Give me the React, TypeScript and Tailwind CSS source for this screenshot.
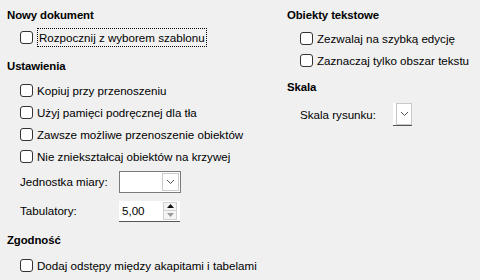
import React from 'react';

function Box() {
  return (
    <span className="w-[13px] h-[13px] shrink-0 rounded-[3px] border border-[#333333] bg-white" />
  );
}

function Check({ label, focused = false }: { label: string; focused?: boolean }) {
  return (
    <div className="flex items-center h-[22px] pl-[13px] gap-[4px]">
      <Box />
      <span
        className={
          focused
            ? 'border border-dotted border-black px-[1px] leading-[17px]'
            : 'leading-[17px]'
        }
      >
        {label}
      </span>
    </div>
  );
}

function Heading({ children, className = '' }: { children: React.ReactNode; className?: string }) {
  return (
    <div className={'h-[20px] flex items-center font-bold text-[11.4px] tracking-[-0.1px] ' + className}>
      {children}
    </div>
  );
}

function Chevron() {
  return (
    <svg width="9" height="6" viewBox="0 0 9 6" fill="none">
      <path d="M1 1l3.5 3.5L8 1" stroke="#555" strokeWidth="1" />
    </svg>
  );
}

function Dropdown() {
  return (
    <div className="w-[62px] h-[22px] flex border border-[#7a7a7a] bg-white">
      <div className="flex-1" />
      <div className="w-[17px] m-[1px] ml-0 border border-[#cccccc] flex items-center justify-center">
        <Chevron />
      </div>
    </div>
  );
}

function Spin() {
  return (
    <div className="w-[61px] h-[21px] flex items-center bg-white border-b border-[#555555]">
      <span className="pl-[3px] flex-1">5,00</span>
      <div className="w-[14px] h-[18px] mr-[3px] flex flex-col border border-[#d0d0d0] bg-[#f4f4f4]">
        <div className="flex-1 flex items-center justify-center border-b border-[#d0d0d0]">
          <svg width="7" height="4" viewBox="0 0 7 4">
            <path d="M0 4L3.5 0L7 4Z" fill="#111" />
          </svg>
        </div>
        <div className="flex-1 flex items-center justify-center">
          <svg width="7" height="4" viewBox="0 0 7 4">
            <path d="M0 0L3.5 4L7 0Z" fill="#999" />
          </svg>
        </div>
      </div>
    </div>
  );
}

function SmallDropdown() {
  return (
    <div className="h-[23px] flex border-b border-[#555555]">
      <div className="w-[3px] bg-white" />
      <div className="w-[16px] border border-[#c8c8c8] bg-white flex items-center justify-center">
        <Chevron />
      </div>
    </div>
  );
}

export default function App() {
  return (
    <div
      className="w-[480px] h-[280px] bg-[#f0f0f0] text-black text-[11.6px] flex overflow-hidden"
      style={{ fontFamily: '"Liberation Sans", Arial, sans-serif' }}
    >
      <div className="w-[280px] pl-[7px] pt-[6px] flex flex-col">
        <Heading>Nowy dokument</Heading>
        <Check label="Rozpocznij z wyborem szablonu" focused />
        <Heading className="mt-[9px]">Ustawienia</Heading>
        <div className="mt-[2px] flex flex-col">
          <Check label="Kopiuj przy przenoszeniu" />
          <Check label="Użyj pamięci podręcznej dla tła" />
          <Check label="Zawsze możliwe przenoszenie obiektów" />
          <Check label="Nie zniekształcaj obiektów na krzywej" />
        </div>
        <div className="mt-[4px] pl-[13px] flex items-center h-[22px]">
          <span className="w-[99px]">Jednostka miary:</span>
          <Dropdown />
        </div>
        <div className="mt-[7px] pl-[13px] flex items-center h-[22px]">
          <span className="w-[99px]">Tabulatory:</span>
          <Spin />
        </div>
        <Heading className="mt-[9px]">Zgodność</Heading>
        <div className="mt-[3px]">
          <Check label="Dodaj odstępy między akapitami i tabelami" />
        </div>
      </div>
      <div className="flex-1 pl-[7px] pt-[6px] flex flex-col">
        <Heading>Obiekty tekstowe</Heading>
        <div className="mt-[1px] flex flex-col">
          <Check label="Zezwalaj na szybką edycję" />
          <Check label="Zaznaczaj tylko obszar tekstu" />
        </div>
        <Heading className="mt-[7px]">Skala</Heading>
        <div className="mt-[5px] pl-[13px] flex items-center h-[23px]">
          <span className="w-[93px]">Skala rysunku:</span>
          <SmallDropdown />
        </div>
      </div>
    </div>
  );
}
